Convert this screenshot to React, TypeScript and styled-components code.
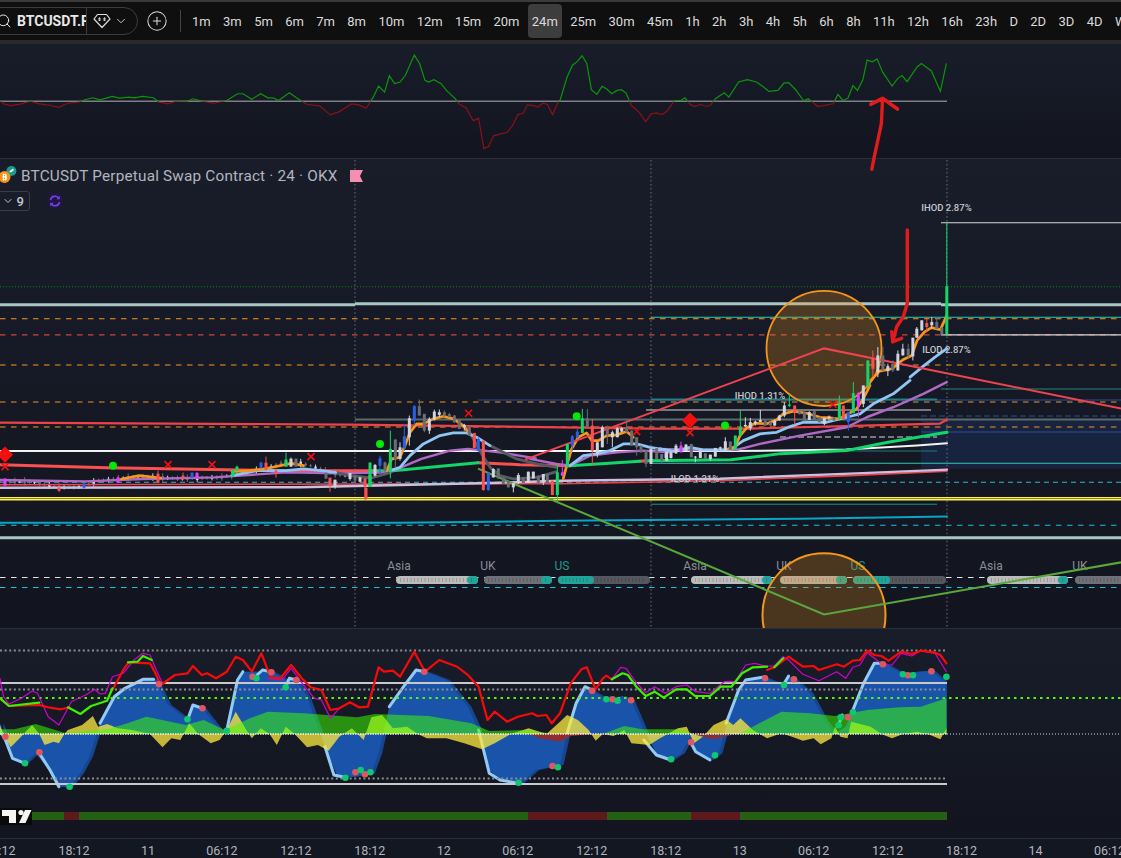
import React from 'react'
import styled, { createGlobalStyle } from 'styled-components'
import { ChevronDown, CirclePlus, Search } from 'lucide-react'

const GlobalStyle = createGlobalStyle`
  html, body {
    margin: 0;
    padding: 0;
    background: #131722;
    overflow: hidden;
  }
  * { box-sizing: border-box; }
`

const Stage = styled.div`
  position: relative;
  width: 1121px;
  height: 858px;
  display: flex;
  flex-direction: column;
  overflow: hidden;
  font-family: Roboto, 'Liberation Sans', sans-serif;
  background: #131722;
`

const Toolbar = styled.header`
  flex: none;
  height: 44px;
  display: flex;
  align-items: center;
  background: #0f0f0f;
  border-top: 2px solid #3a3a3a;
  border-bottom: 4px solid #2a2a2a;
  overflow: hidden;
`

const SymbolPill = styled.div`
  flex: none;
  margin-left: -20px;
  width: 158px;
  height: 28px;
  display: flex;
  align-items: center;
  border: 1px solid #3c3c3c;
  border-radius: 14px;
  color: #dbdbdb;
`

const SymbolName = styled.div`
  width: 106px;
  height: 100%;
  display: flex;
  align-items: center;
  gap: 5px;
  padding-left: 15px;
  border-right: 1px solid #3c3c3c;
  overflow: hidden;
  white-space: nowrap;
  font-size: 14px;
  font-weight: 700;
  color: #e8e8e8;
  svg {
    flex: none;
  }
`

const GemBox = styled.div`
  flex: 1;
  display: flex;
  align-items: center;
  justify-content: center;
  gap: 3px;
  padding-right: 4px;
`

const AddButton = styled.div`
  flex: none;
  margin-left: 8px;
  width: 22px;
  display: flex;
  color: #dbdbdb;
`

const Divider = styled.div`
  flex: none;
  margin: 0 7px 0 12px;
  width: 1px;
  height: 22px;
  background: #434343;
`

const Intervals = styled.nav`
  display: flex;
  align-items: center;
  gap: 4.35px;
`

const Interval = styled.button<{ $active?: boolean }>`
  flex: none;
  height: 34px;
  padding: 0 4px;
  border: 0;
  border-radius: 4px;
  background: ${(p) => (p.$active ? '#3d3d3d' : 'transparent')};
  color: #dbdbdb;
  font-family: inherit;
  font-size: 13px;
  white-space: nowrap;
`

const Pane = styled.section<{ $height: number }>`
  position: relative;
  flex: none;
  height: ${(p) => p.$height}px;
  background: linear-gradient(180deg, #191d2a 0%, #12151f 100%);
  border-bottom: 1px solid #2a2e39;
  overflow: hidden;
`

const Chart = styled.svg`
  display: block;
  width: 100%;
  height: 100%;
`

const Legend = styled.div`
  position: absolute;
  top: 8px;
  left: 0;
  display: flex;
  flex-direction: column;
  gap: 6px;
  color: #b2b5be;
`

const LegendTitle = styled.div`
  height: 18px;
  display: flex;
  align-items: center;
  font-size: 15.3px;
  letter-spacing: 0.2px;
  white-space: nowrap;
  svg {
    flex: none;
  }
`

const FlagMark = styled.span`
  margin-left: 12px;
  display: flex;
`

const LegendTools = styled.div`
  display: flex;
  align-items: center;
  gap: 16px;
`

const CountBox = styled.div`
  margin-left: -4px;
  width: 34px;
  height: 20px;
  display: flex;
  align-items: center;
  justify-content: flex-end;
  gap: 3px;
  padding-right: 5px;
  border: 1px solid #3a3e4a;
  border-radius: 3px;
  font-size: 13px;
  font-weight: 500;
  color: #c4c7cf;
`

const TimeAxis = styled.footer`
  flex: 1;
  margin-left: -37px;
  padding-top: 4px;
  display: flex;
  align-items: center;
  font-size: 12.5px;
  color: #b2b5be;
`

const TimeLabel = styled.span`
  flex: none;
  width: 73.97px;
  text-align: center;
`

const Annotations = styled.svg`
  position: absolute;
  inset: 0;
  width: 1121px;
  height: 858px;
  pointer-events: none;
`

// the points below are read off 2.8x / 3x crops of the reference, so keep the crop numbers
const crop = (s: string, ox: number, oy: number, sx = 2.8, sy = 3) =>
  s
    .trim()
    .split(/\s+/)
    .map((p) => {
      const [x, y] = p.split(',').map(Number)
      return `${(ox + x / sx).toFixed(1)},${(oy + y / sy).toFixed(1)}`
    })
    .join(' ')

const intervals = [
  '1m', '3m', '5m', '6m', '7m', '8m', '10m', '12m', '15m', '20m', '24m', '25m', '30m', '45m',
  '1h', '2h', '3h', '4h', '5h', '6h', '8h', '11h', '12h', '16h', '23h', 'D', '2D', '3D', '4D', 'W',
]

const timeLabels = [
  '12:12', '18:12', '11', '06:12', '12:12', '18:12', '12', '06:12', '12:12', '18:12', '13',
  '06:12', '12:12', '18:12', '14', '06:12',
]

/* top oscillator */
const momentum = [
  crop(
    `0,300 10,310 30,315 60,310 85,302 110,310 140,314 165,320 190,308 220,305 240,297 260,292 280,298 315,288 335,293
    360,290 375,292 400,288 430,292 445,305 470,310 490,303 525,302 540,295 565,302 600,308 635,300 665,280 680,280
    705,296 730,280 750,292 765,292 780,300 810,277 830,292 860,312 895,316 925,343 950,333 985,310 1005,313 1025,323
    1045,290 1060,257 1077,275 1090,226 1105,250 1120,245 1135,225 1160,165 1175,190 1190,240 1200,245 1215,238 1235,250
    1250,270 1275,295 1285,310 1305,322 1325,360 1340,353 1355,443 1368,437 1382,405 1400,400 1420,395 1435,375 1450,342
    1465,338 1477,313 1495,315 1505,320 1520,308 1533,312 1547,342 1565,300`,
    0,
    0,
  ),
  crop(
    `0,300 20,230 35,195 47,185 62,167 75,190 88,268 103,282 118,258 130,265 145,280 160,270 172,268 185,278 200,315 222,335
    240,363 255,340 270,337 285,342 300,332 320,300 338,300 350,292 365,312 378,318 393,312 408,317 420,315 435,295 460,277
    473,290 500,245 525,238 550,245 570,260 585,273 610,270 627,248 640,247 660,268 682,301 695,295 722,318 765,310 778,282
    792,300 806,293 820,256 833,270 848,238 860,180 875,185 888,176 903,215 930,257 945,235 958,226 972,244 1000,200 1012,190
    1040,212 1065,273 1082,190`,
    560,
    0,
  ),
].join(' ')

/* main pane */
type Level = { y: number; x1?: number; x2?: number; c: string; w?: number; dash?: string }
const orangeDash = '5.5 5.5'
const levels: Level[] = [
  { y: 222.5, x1: 941, c: '#d8d8d8' },
  { y: 286.5, c: '#0c8a12', dash: '1 2' },
  { y: 304.5, x2: 355, c: '#a9c6c2', w: 3 },
  { y: 303.5, x1: 355, x2: 941, c: '#a9c6c2', w: 3 },
  { y: 304.5, x1: 941, c: '#a9c6c2', w: 3 },
  { y: 317, x1: 651, c: '#2fc9b2', w: 1 },
  { y: 318.5, c: '#f5971d', dash: orangeDash },
  { y: 334.5, c: '#d0463d', dash: orangeDash },
  { y: 334.5, x1: 941, c: '#d8d8d8' },
  { y: 364.5, c: '#f5971d', dash: orangeDash },
  { y: 388.5, x1: 941, c: '#1f8a7d' },
  { y: 399.5, x1: 478, c: '#2a4f9e' },
  { y: 399, x1: 651, x2: 937, c: '#23808a', w: 2 },
  { y: 401.5, c: '#e8962a', dash: orangeDash },
  { y: 409.5, x1: 646, x2: 931, c: '#d8d8d8' },
  { y: 415.5, x1: 921, c: '#2a4f9e', dash: '6 3' },
  { y: 419, x1: 355, c: '#5c6b6a', w: 2 },
  { y: 426.5, c: '#f5971d', dash: orangeDash },
  { y: 431.5, x1: 921, c: '#2a4f9e' },
  { y: 436.5, x1: 780, x2: 937, c: '#d8d8d8', dash: '6 3' },
  { y: 450.5, x1: 651, x2: 937, c: '#1a7f80' },
  { y: 462.5, x1: 651, c: '#2fc9b2' },
  { y: 481.5, c: '#2fb9c9', dash: '5 4' },
  { y: 497, c: '#fff04a', w: 1.5 },
  { y: 499, c: '#fff04a', w: 1.5 },
  { y: 503.5, x1: 651, x2: 937, c: '#1a8f8a' },
  { y: 524.5, c: '#12c4dc', dash: '5.5 5.5' },
  { y: 537, c: '#a9c6c2', w: 3 },
  { y: 576.5, c: '#e3e3e3', dash: '5.5 5.5' },
  { y: 586.5, c: '#12c4dc', dash: '5.5 5.5' },
]

const redUpper = '0,422 350,424 650,428 750,428 900,424 940,423 947,419'
const whiteBand = '0,450.5 730,450.5 846,449 917,445 947,442.7'
const cyanBand = '0,522 400,522 560,520 800,518 947,515.7'
const lilacBand = '0,487 300,486.5 500,482 560,480 720,478 850,473 947,469'
const redBand = '0,484 560,483 720,480 850,475 947,470.5'

// slow line, red while below price and green above
const slowRed = ['0,464 107,467 285,470 372,470', '478,462 520,464 570,465', '640,460.7 646,460']
const slowGreen = ['372,470 393,470 478,462', '570,465 640,460.7', '646,460 731,459 781,453 846,450 888,441.7 947,431.7']

const purple =
  crop('0,268 120,270 240,272 400,265 600,260 800,245 950,248 1090,245 1180,205 1260,180 1310,175 1400,185 1500,203', 0, 390) +
  ' ' +
  crop('540,190 620,205 660,210 720,180 800,170 880,165 960,170', 350, 395, 3) +
  ' ' +
  crop('0,205 100,208 230,208 300,190 420,165 560,140 620,110 700,80 790,40 860,5', 660, 380, 3)

const skyLines = [
  crop('650,255 720,240 800,240 850,235 900,240 940,245', 0, 390),
  crop('120,225 150,215 180,180 220,145 270,120 310,112 350,112 380,125 420,150', 350, 395, 3),
  crop('660,210 700,180 740,175 780,165 820,145 860,145 900,155 960,165', 350, 395, 3),
  crop('0,205 40,212 90,200 130,208 210,208 250,180 300,160 350,155 390,138 430,125 500,125 560,110 600,100 640,70 700,40 750,0', 660, 380, 3),
  crop('980,530 1020,495 1050,470 1083,445', 560, 200),
]

const greyLines = [
  crop('940,245 980,255 1040,262 1095,245', 0, 390),
  crop('350,95 370,130 395,175 420,215 450,240 490,250 560,245 620,228', 350, 395, 3),
  crop('420,150 460,170 500,190 560,205 620,215', 350, 395, 3),
]

const orangeLines = [
  crop('340,265 390,255 450,262', 0, 390),
  crop('650,243 700,240 740,235 815,218 850,225', 0, 390),
  crop('110,225 125,190 150,185 165,150 180,110 200,85 220,85 250,70 280,62 310,70 340,90 355,110', 350, 395, 3),
  crop('640,248 650,210 665,160 685,125 710,112 725,135 745,135 770,120 800,118 830,108 850,125', 350, 395, 3),
  crop('205,205 225,200 240,165 260,142 285,128 320,130 350,118 370,100 400,92 440,98 480,110 510,112 535,115 565,100 590,85 610,55 630,15', 660, 380, 3),
  crop('870,540 895,512 930,505 960,478 985,465 1000,420 1020,395 1040,382 1065,388 1083,345', 560, 200),
]

const candleColors: Record<string, string> = {
  w: '#d1d4dc',
  g: '#6a6d75',
  G: '#12d668',
  b: '#2a5fe8',
  r: '#fb5050',
  m: '#e040fb',
}
type Candle = [number, number, number, number, number, string]

const middleCandles: Candle[] = (
  [
    [0, 232, 232, 250, 255, 'w'], [15, 238, 240, 255, 262, 'g'], [30, 243, 245, 258, 260, 'w'], [45, 248, 248, 272, 315, 'r'],
    [60, 200, 238, 273, 273, 'G'], [75, 205, 208, 240, 242, 'w'], [90, 180, 188, 210, 235, 'b'], [105, 198, 200, 225, 235, 'g'],
    [121, 105, 160, 228, 248, 'G'], [136, 130, 132, 190, 215, 'g'], [150, 140, 155, 190, 195, 'w'], [163, 85, 122, 158, 165, 'b'],
    [178, 60, 68, 125, 150, 'w'], [193, 28, 32, 75, 90, 'b'], [208, 12, 32, 60, 60, 'g'], [223, 55, 55, 105, 110, 'g'],
    [238, 65, 70, 105, 115, 'w'], [253, 42, 48, 72, 75, 'w'], [268, 42, 50, 58, 65, 'w'], [283, 45, 50, 60, 64, 'g'],
    [298, 52, 56, 64, 66, 'g'], [313, 58, 60, 80, 82, 'g'], [328, 72, 72, 100, 100, 'g'], [343, 85, 88, 94, 105, 'w'],
    [358, 95, 95, 120, 120, 'g'], [373, 112, 112, 157, 157, 'r'], [385, 125, 130, 165, 168, 'b'], [400, 135, 135, 283, 285, 'r'],
    [415, 230, 232, 283, 285, 'b'], [430, 218, 220, 245, 246, 'w'], [445, 218, 218, 248, 250, 'g'], [460, 245, 245, 265, 265, 'g'],
    [475, 255, 255, 275, 275, 'g'], [490, 262, 262, 275, 290, 'w'], [505, 232, 238, 262, 265, 'w'], [520, 245, 245, 262, 262, 'g'],
    [535, 228, 228, 262, 262, 'w'], [550, 228, 228, 248, 248, 'w'], [565, 240, 240, 260, 265, 'g'], [580, 235, 235, 260, 268, 'w'],
    [592, 235, 235, 262, 262, 'g'], [607, 255, 255, 298, 298, 'r'], [622, 205, 230, 298, 315, 'G'], [637, 193, 230, 240, 240, 'm'],
    [652, 145, 145, 215, 215, 'G'], [667, 118, 122, 150, 165, 'b'], [682, 100, 108, 125, 128, 'b'], [697, 40, 68, 112, 112, 'G'],
    [712, 40, 68, 95, 95, 'g'], [727, 70, 90, 165, 210, 'r'], [742, 140, 140, 175, 185, 'w'], [757, 90, 95, 155, 155, 'w'],
    [772, 90, 100, 118, 145, 'g'], [787, 105, 110, 125, 155, 'w'], [802, 95, 98, 125, 125, 'w'], [815, 95, 98, 108, 110, 'w'],
    [830, 72, 95, 110, 110, 'g'], [845, 105, 105, 150, 150, 'g'], [860, 125, 125, 155, 180, 'g'], [873, 150, 150, 170, 172, 'g'],
    [888, 165, 165, 205, 215, 'g'], [903, 160, 160, 205, 205, 'w'], [920, 158, 158, 190, 190, 'g'], [935, 175, 175, 195, 205, 'g'],
    [950, 168, 168, 195, 197, 'w'],
  ] as Candle[]
).map(([x, a, b, c, d, k]) => [350 + x / 3, 395 + a / 3, 395 + b / 3, 395 + c / 3, 395 + d / 3, k] as Candle)

const lateCandles: Candle[] = (
  [
    [18, 216, 218, 232, 234, 'w'], [33, 213, 215, 232, 234, 'w'], [48, 190, 195, 218, 220, 'w'], [63, 183, 195, 215, 216, 'm'],
    [78, 190, 192, 212, 212, 'w'], [94, 190, 190, 230, 230, 'g'], [106, 226, 228, 231, 245, 'w'], [121, 205, 210, 232, 232, 'w'],
    [136, 218, 218, 235, 235, 'g'], [151, 222, 222, 235, 240, 'w'], [166, 202, 202, 228, 228, 'w'], [181, 198, 200, 204, 212, 'w'],
    [196, 170, 182, 210, 210, 'w'], [211, 183, 183, 208, 208, 'g'], [226, 165, 165, 208, 208, 'G'], [241, 90, 140, 165, 165, 'G'],
    [256, 110, 133, 138, 140, 'w'], [271, 112, 125, 143, 150, 'w'], [286, 120, 123, 129, 135, 'w'], [301, 88, 118, 124, 125, 'w'],
    [316, 118, 120, 135, 135, 'g'], [331, 123, 125, 135, 135, 'g'], [344, 118, 120, 135, 135, 'w'], [358, 103, 105, 120, 120, 'w'],
    [373, 65, 75, 105, 110, 'w'], [388, 40, 72, 76, 80, 'G'], [404, 75, 75, 95, 132, 'r'], [418, 90, 93, 100, 102, 'g'],
    [433, 95, 95, 120, 122, 'g'], [448, 92, 95, 118, 118, 'w'], [463, 92, 92, 118, 118, 'g'], [478, 110, 110, 125, 125, 'g'],
    [493, 112, 112, 130, 134, 'w'], [507, 105, 108, 113, 118, 'w'], [522, 110, 110, 120, 120, 'g'], [538, 45, 72, 115, 120, 'G'],
    [550, 75, 75, 115, 115, 'r'], [565, 95, 95, 125, 150, 'b'], [580, 5, 38, 98, 98, 'G'], [595, 35, 38, 78, 110, 'm'],
    [610, 15, 15, 70, 80, 'w'],
  ] as Candle[]
).map(([x, a, b, c, d, k]) => [660 + x / 3, 380 + a / 3, 380 + b / 3, 380 + c / 3, 380 + d / 3, k] as Candle)

const lastCandles: Candle[] = (
  [
    [862, 480, 480, 558, 558, 'G'], [876, 450, 475, 505, 530, 'r'], [890, 440, 465, 515, 530, 'w'], [904, 440, 465, 510, 510, 'g'],
    [918, 490, 497, 512, 527, 'w'], [932, 480, 495, 510, 515, 'g'], [946, 450, 460, 510, 510, 'w'], [960, 430, 445, 465, 465, 'w'],
    [975, 430, 445, 465, 475, 'g'], [988, 412, 412, 468, 480, 'w'], [999, 380, 385, 412, 412, 'w'], [1013, 360, 360, 390, 390, 'w'],
    [1027, 350, 368, 380, 395, 'r'], [1041, 350, 365, 375, 385, 'w'], [1055, 350, 365, 385, 385, 'g'], [1069, 382, 382, 402, 402, 'g'],
    [1083, 68, 258, 402, 402, 'G'],
  ] as Candle[]
).map(([x, a, b, c, d, k]) => [560 + x / 2.8, 200 + a / 3, 200 + b / 3, 200 + c / 3, 200 + d / 3, k] as Candle)

// the quiet stretch left of the first session line is too small to read one by one
const quietPath: [number, number][] = [
  [0, 481], [30, 481], [60, 487], [80, 486], [100, 480], [140, 476], [180, 478], [220, 477], [240, 473],
  [265, 468], [290, 460], [310, 465], [330, 472], [350, 476],
]
const quietY = (x: number) => {
  for (let i = 1; i < quietPath.length; i++) {
    const [x0, y0] = quietPath[i - 1]
    const [x1, y1] = quietPath[i]
    if (x <= x1) return y0 + ((x - x0) / (x1 - x0)) * (y1 - y0)
  }
  return 476
}
const quietCandles: Candle[] = Array.from({ length: 71 }, (_, i) => {
  const x = i * 4.93
  const y = quietY(x)
  const h = [1, 2, 1.5, 3, 1, 3.5, 1.5][i % 7]
  return [x, y - h - 1, y - h / 2, y + h / 2, y + h + 0.5, i % 3 === 1 ? 'w' : 'g'] as Candle
})
const quietSpecials: Candle[] = [
  [5, 478, 478, 485, 485, 'm'], [59, 486, 487, 490, 491, 'r'], [84, 482, 483, 487, 488, 'b'], [118, 476, 477, 482, 482, 'm'],
  [158, 470, 473, 482, 482, 'r'], [183, 472, 475, 478, 479, 'r'], [192, 472, 472, 477, 477, 'b'], [197, 472, 472, 478, 478, 'm'],
  [233, 469, 469, 476, 476, 'G'], [237, 465, 466, 470, 470, 'G'], [261, 461, 462, 467, 468, 'b'], [266, 456, 462, 469, 470, 'r'],
  [276, 468, 470, 473, 477, 'r'], [286, 452, 459, 466, 466, 'G'], [291, 458, 458, 466, 466, 'w'], [296, 458, 458, 466, 466, 'g'],
  [326, 472, 472, 478, 478, 'g'], [330, 477, 477, 485, 491, 'r'], [335, 479, 479, 486, 488, 'w'], [366, 487, 487, 498, 499, 'r'],
  [370, 462, 462, 486, 486, 'G'],
]

const crosses: [number, number][] = [
  [5, 466], [168, 464], [212, 464], [311, 456], [468.6, 412.7], [636.7, 431], [690, 432], [833, 404],
]
const diamonds: [number, number][] = [[5, 454], [690, 420]]
const limeDots: [number, number][] = [[113, 465], [380, 443.5], [576.7, 415.7], [725, 425]]

const sessionLabels: [string, number, boolean?][] = [
  ['Asia', 399], ['UK', 488], ['US', 562, true], ['Asia', 695], ['UK', 784], ['US', 858, true], ['Asia', 991], ['UK', 1080],
]
const sessionBars: [number, number, string][] = [
  [396, 478, '#bcbcbc'], [467, 478, '#21a59a'], [484, 552, '#6f7178'], [541, 552, '#21a59a'],
  [558, 650, '#55585f'], [558, 594, '#21a59a'], [691, 772, '#bcbcbc'], [762, 772, '#21a59a'],
  [780, 847, '#b0b0b0'], [836, 847, '#21a59a'], [853, 946, '#55585f'], [853, 890, '#21a59a'],
  [987, 1068, '#bcbcbc'], [1058, 1068, '#21a59a'], [1075, 1125, '#6f7178'],
]

/* lower oscillator */
const waveTop =
  crop(
    `0,280 15,320 35,385 70,400 100,370 130,410 165,470 195,470 225,430 250,380 280,280 320,200 350,175 400,148 435,148
    470,225 525,270 540,225 567,235 615,300 635,300 665,150 680,125 720,125 750,120 800,150 830,150 860,200 880,260 910,350
    945,440 990,440 1040,430 1060,370 1090,230 1130,180 1165,120 1190,125 1250,150 1310,230 1340,300 1370,420 1400,450
    1455,462 1500,420 1545,410`,
    0,
    630,
  ) +
  ' ' +
  crop(
    `0,405 20,310 40,230 70,170 100,190 130,208 175,198 200,212 235,300 270,370 310,390 340,370 365,320 380,365 420,390 445,370
    470,270 510,165 545,140 575,145 625,165 640,138 655,148 700,190 740,270 770,310 800,290 820,240 850,160 880,100 905,100
    960,132 1000,125 1040,122 1082,160`,
    560,
    630,
  )

const waveEdges = [
  crop('0,300 15,330 35,385 70,400', 0, 630),
  crop('110,370 140,420 165,470', 0, 630),
  crop('280,280 320,200 350,175 400,148 430,148', 0, 630),
  crop('525,270 540,225 567,235', 0, 630),
  crop('635,300 665,150 680,125', 0, 630),
  crop('720,135 735,120 760,125', 0, 630),
  crop('800,170 810,145 830,150', 0, 630),
  crop('910,350 935,435 965,442', 0, 630),
  crop('1090,230 1130,170 1165,120 1190,125', 0, 630),
  crop('1340,300 1370,430 1400,450 1450,460', 0, 630),
  crop('20,310 45,220 70,170 90,180', 560, 630),
  crop('235,330 270,375 310,390', 560, 630),
  crop('365,335 380,365 420,390', 560, 630),
  crop('465,280 500,180 520,150 575,140', 560, 630),
  crop('625,165 640,138', 560, 630),
  crop('780,285 790,255', 560, 630),
  crop('820,240 850,160 880,100 905,100', 560, 630),
]

const greenTop =
  crop(
    `0,298 40,298 100,282 180,308 300,298 350,282 410,260 520,285 570,270 630,300 700,265 750,245 850,250 1000,262 1050,252
    1200,258 1320,280 1370,303 1480,300 1550,312`,
    0,
    630,
  ) +
  ' ' +
  crop(
    `120,312 180,288 230,298 280,298 340,298 375,312 500,312 540,290 620,245 700,250 770,258 860,240 950,232 1010,230 1082,205`,
    560,
    630,
  )

const yellowTop =
  crop(
    `0,285 8,312 30,352 55,325 90,285 110,312 125,345 150,335 165,340 180,312 190,300 230,285 260,258 275,290 300,282 330,295
    370,300 420,312 455,352 480,325 505,330 530,280 555,312 590,340 615,330 635,300 660,245 690,300 705,325 730,295 755,312
    775,345 800,290 825,312 860,352 890,345 920,362 950,320 985,295 1018,330 1040,262 1070,255 1100,295 1140,290 1170,312
    1195,325 1250,325 1300,340 1350,358 1385,340 1430,312 1480,295 1530,312`,
    0,
    630,
  ) +
  ' ' +
  crop(
    `0,275 20,255 50,270 80,300 100,332 120,312 150,318 180,300 200,340 250,345 280,325 330,295 355,290 375,340 400,320 430,285
    465,268 485,285 505,265 540,300 580,325 620,310 650,320 680,332 710,325 730,343 760,325 770,290 785,320 805,325 815,275
    870,290 900,312 930,325 960,312 1000,305 1030,312 1065,328 1082,295`,
    560,
    630,
  )

const redLines = [
  crop('0,205 25,228 110,225 140,233 170,238 195,232', 0, 630),
  crop(
    `315,180 345,120 360,97 420,100 435,130 450,165 490,135 525,130 540,108 565,135 580,130 605,145 635,125 660,80 680,90 705,125
    732,70 758,143 785,145 815,105 845,145 870,172 900,180 925,240 950,235 980,217 1005,232 1030,230 1060,112 1075,125 1100,122
    1120,140 1160,65 1190,125 1230,90 1280,110 1310,135 1340,170 1365,270 1385,245 1420,275 1450,260 1490,250 1505,258 1530,255
    1545,280 1568,250`,
    0,
    630,
  ) +
    ' ' +
    crop('0,250 30,160 60,118 75,112 100,178 120,145 130,137 145,148', 560, 630),
  crop(
    `580,120 600,112 640,80 680,110 710,108 725,120 775,103 795,110 820,92 840,90 860,62 880,75 900,78 920,92 955,65 985,72
    1010,62 1050,68 1065,75 1082,100`,
    560,
    630,
  ),
]

const limeLines = [
  crop('0,205 25,228 110,218', 0, 630),
  crop('190,232 225,252 255,228 300,212 315,175', 0, 630),
  crop('358,97 385,95 400,78 425,90', 0, 630),
  crop(
    `145,148 175,130 190,135 215,172 240,198 265,185 290,203 325,178 355,178 378,198 420,198 450,170 480,170 510,130 540,112 580,110`,
    560,
    630,
  ),
  crop('600,112 625,85', 560, 630),
]

const magentaLines = [
  crop(
    `0,145 10,200 25,222 60,205 90,183 105,190 135,260 165,285 200,215 240,195 265,178 280,192 295,190 315,140 345,130 375,90
    400,70 420,75 440,125 455,160`,
    0,
    630,
  ),
  crop('750,145 790,150 815,115 850,165 880,205 900,210 925,265 950,235', 0, 630),
  crop(
    `145,148 170,112 185,115 215,160 240,188 265,170 295,190 325,170 355,165 380,185 420,190 460,155 490,155 520,105 545,100
    575,108 600,108 625,80 640,90 680,133 725,152 775,125 800,145 820,112 840,105 860,68 905,105 930,105 955,70 985,78
    1010,62 1050,70 1082,125`,
    560,
    630,
  ),
]

const redDots = [
  ...crop('15,320 110,367 445,163 567,235 707,140 760,127 830,150 995,427 1022,433 1188,125 1547,408', 0, 630).split(' '),
  ...crop('90,182 147,208 199,211 367,337 574,145 655,148 806,262 904,103 974,136 1040,124', 560, 630).split(' '),
]
const greenDots = [
  ...crop('70,400 195,470 525,268 635,302 718,145 800,172 967,443 1010,420 1037,427 1452,458 1562,412', 0, 630).split(' '),
  ...crop('130,208 161,212 311,388 434,376 627,165 780,286 786,262 820,247 960,133 988,136 1082,140', 560, 630).split(' '),
]

const statusBar: [number, number, string][] = [
  [32, 64, '#245f14'], [64, 79, '#5c1a1e'], [79, 528, '#245f14'], [528, 607, '#5c1a1e'],
  [607, 691, '#245f14'], [691, 740, '#5c1a1e'], [740, 947, '#245f14'],
]

const Lines = ({ list, c, w }: { list: string[]; c: string; w: number }) => (
  <g fill="none" stroke={c} strokeWidth={w} strokeLinejoin="round" strokeLinecap="round">
    {list.map((p, i) => (
      <polyline key={i} points={p} />
    ))}
  </g>
)

const Candles = ({ list, w = 3 }: { list: Candle[]; w?: number }) => (
  <g>
    {list.map(([x, wt, bt, bb, wb, k], i) => (
      <g key={i} fill={candleColors[k]}>
        <rect x={x - 0.5} y={wt} width={1} height={wb - wt} />
        <rect x={x - w / 2} y={bt} width={w} height={Math.max(bb - bt, 1)} />
      </g>
    ))}
  </g>
)

const MomentumChart = () => (
  <Chart viewBox="0 44 1121 113" preserveAspectRatio="none">
    <defs>
      <clipPath id="above">
        <rect x="0" y="0" width="1121" height="101" />
      </clipPath>
      <clipPath id="below">
        <rect x="0" y="101" width="1121" height="60" />
      </clipPath>
    </defs>
    <line x1="0" x2="947" y1="100.8" y2="100.8" stroke="#7c7f88" strokeWidth="1.5" />
    <polyline points={momentum} fill="none" stroke="#0b960b" strokeWidth="1.2" clipPath="url(#above)" />
    <polyline points={momentum} fill="none" stroke="#8c1016" strokeWidth="1.2" clipPath="url(#below)" />
  </Chart>
)

const MainChart = () => (
  <Chart viewBox="0 159 1121 468" preserveAspectRatio="none">
    <rect x="921" y="418" width="200" height="50" fill="#17233f" />
    {[355, 651, 947].map((x) => (
      <line key={x} x1={x} x2={x} y1="160" y2="628" stroke="#6d717b" strokeDasharray="1.5 2.5" />
    ))}
    {levels.map((l, i) => (
      <line
        key={i}
        x1={l.x1 ?? 0}
        x2={l.x2 ?? 1121}
        y1={l.y}
        y2={l.y}
        stroke={l.c}
        strokeWidth={l.w ?? 1}
        strokeDasharray={l.dash}
      />
    ))}

    <Candles list={quietCandles} w={2.5} />

    <Lines list={[redUpper]} c="#f0404c" w={2.2} />
    <Lines list={[cyanBand]} c="#06a6c6" w={2} />
    <Lines list={[redBand]} c="#f0404c" w={1.6} />
    <Lines list={[whiteBand]} c="#f2f2f2" w={2} />
    <Lines list={[lilacBand]} c="#cdbfdc" w={2.4} />
    <Lines list={slowRed} c="#fb5050" w={3} />
    <Lines list={slowGreen} c="#12d668" w={3} />

    {sessionBars.map(([a, b, c], i) => (
      <g key={i} fill="none" strokeLinecap="round">
        <line x1={a + 4} x2={b - 4} y1="579" y2="579" stroke={c} strokeWidth="8" />
        <line x1={a + 4} x2={b - 4} y1="579" y2="579" stroke="#00000030" strokeWidth="4" strokeDasharray="1 2.5" strokeLinecap="butt" />
      </g>
    ))}
    {sessionLabels.map(([t, x, teal], i) => (
      <text key={i} x={x} y="569" fontSize="12" textAnchor="middle" fill={teal ? '#1d9a90' : '#8a8d96'}>
        {t}
      </text>
    ))}

    <circle cx="824" cy="348" r="57.5" fill="#f5971d" fillOpacity="0.25" stroke="#f5971d" strokeWidth="1.8" />
    <circle cx="824" cy="614" r="61.5" fill="#f5971d" fillOpacity="0.25" stroke="#f5971d" strokeWidth="2" />

    <Lines list={[purple]} c="#b06ac6" w={2.4} />
    <Lines list={greyLines} c="#555a62" w={2.8} />
    <Lines list={skyLines} c="#90c6f4" w={2.8} />
    <Lines list={orangeLines} c="#f7951d" w={2.7} />

    <polyline points="525,459 824,348 1121,408" fill="none" stroke="#ef4350" strokeWidth="2" />
    <polyline points="478,468 824,613.5 1121,561.5" fill="none" stroke="#5aa83c" strokeWidth="2" />

    <Candles list={quietSpecials} />
    <Candles list={middleCandles} />
    <Candles list={lateCandles} />
    <Candles list={lastCandles} />

    {diamonds.map(([x, y], i) => (
      <polygon key={i} points={`${x - 8},${y} ${x},${y - 8} ${x + 8},${y} ${x},${y + 8}`} fill="#f40f0f" />
    ))}
    {crosses.map(([x, y], i) => (
      <path
        key={i}
        d={`M${x - 3.5} ${y - 3.5}L${x + 3.5} ${y + 3.5}M${x + 3.5} ${y - 3.5}L${x - 3.5} ${y + 3.5}`}
        stroke="#f40f0f"
        strokeWidth="1.6"
      />
    ))}
    {limeDots.map(([x, y], i) => (
      <circle key={i} cx={x} cy={y} r="4" fill="#05e60b" />
    ))}

    <g fill="#c6c8ce" fontSize="9.5" fontWeight="500" textAnchor="middle">
      <text x="946.5" y="210.5">IHOD 2.87%</text>
      <text x="946.5" y="352.5">ILOD 2.87%</text>
      <text x="760" y="398.5">IHOD 1.31%</text>
      <text x="695" y="481.5">ILOD 1.31%</text>
    </g>
  </Chart>
)

const OscillatorChart = () => (
  <Chart viewBox="0 629 1121 209" preserveAspectRatio="none">
    <defs>
      <clipPath id="plotted">
        <rect x="0" y="629" width="947" height="209" />
      </clipPath>
    </defs>
    <g clipPath="url(#plotted)">
      <polygon points={`0,734 ${waveTop} 946.5,734`} fill="#16468f" transform="translate(3.5 0)" />
    </g>
    <polygon points={`0,734 ${waveTop} 946.5,734`} fill="#1a54aa" />
    <Lines list={waveEdges} c="#92cbf7" w={3} />
    <polygon points={`0,734 ${yellowTop} 946.5,734`} fill="#ffeb3c" fillOpacity="0.75" />
    <polygon points={`0,734 ${greenTop} 946.5,734`} fill="#3cfe00" fillOpacity="0.52" />
    <polygon points={crop('1480,312 1510,325 1568,335', 0, 630) + ' ' + crop('0,335 30,318 100,312', 560, 630)} fill="#8d2c33" />
    <polygon points={crop('370,312 430,328 480,315', 560, 630)} fill="#8d2c33" />

    {[650.5, 689.5, 778.5].map((y) => (
      <line key={y} x1="0" x2="947" y1={y} y2={y} stroke="#8b8d92" strokeWidth="2" strokeDasharray="2 2.6" />
    ))}
    {[683, 784].map((y) => (
      <line key={y} x1="0" x2="947" y1={y} y2={y} stroke="#c9c9c9" strokeWidth="2" />
    ))}
    <line x1="0" x2="1121" y1="698" y2="698" stroke="#54f500" strokeWidth="2" strokeDasharray="2.5 4" />
    <line x1="0" x2="947" y1="734" y2="734" stroke="#f4f4f4" strokeWidth="1.5" strokeDasharray="1.5 1" />
    <line x1="947" x2="1121" y1="734" y2="734" stroke="#d8d8d8" strokeDasharray="1 2" />

    <Lines list={magentaLines} c="#d000d0" w={1.2} />
    <Lines list={redLines} c="#f80a0a" w={2.2} />
    <Lines list={limeLines} c="#3cf000" w={2.2} />

    {redDots.map((p, i) => {
      const [x, y] = p.split(',')
      return <circle key={i} cx={x} cy={y} r="3.3" fill="#e0555f" />
    })}
    {greenDots.map((p, i) => {
      const [x, y] = p.split(',')
      return <circle key={i} cx={x} cy={y} r="3.3" fill="#10c770" />
    })}

    {statusBar.map(([a, b, c]) => (
      <rect key={a} x={a} y="812" width={b - a} height="8" fill={c} />
    ))}
    <rect x="0" y="808" width="32" height="17" fill="#0a0a0a" />
    <path d="M2 810H16V823H9V816H2Z" fill="#f4f4f4" />
    <circle cx="21" cy="812.5" r="2.6" fill="#f4f4f4" />
    <path d="M25 810H31.5L25.5 823H19Z" fill="#f4f4f4" />
  </Chart>
)

const GemIcon = () => (
  <svg width="18" height="16" viewBox="0 0 18 16" fill="none">
    <path d="M4.5 1.5h9L17 6l-8 8.5L1 6z" stroke="#dbdbdb" strokeWidth="1.2" strokeLinejoin="round" />
    <path d="M5 6.2h3L6.5 4zM10 6.2h3L11.5 4zM5.6 6h1.8v2H5.6zM10.6 6h1.8v2h-1.8z" fill="#dbdbdb" />
  </svg>
)

const CoinIcon = () => (
  <svg width="21" height="20" viewBox="0 0 21 20">
    <circle cx="11.4" cy="5" r="5" fill="#1c9a8c" />
    <path d="M9 5.5l4-3 1 1.5-3 2.5z" fill="#e6f6f3" />
    <circle cx="4.5" cy="11" r="6" fill="#f7931a" />
    <path d="M3.5 7.5v7M5.5 7.5v7M2.5 8.5h3.6v2.4H2.5M2.5 11h4v2.6h-4" stroke="#fff" strokeWidth="0.9" fill="none" />
  </svg>
)

const FlagIcon = () => (
  <svg width="13" height="12" viewBox="0 0 13 12">
    <path d="M0 0H13L10 6L13 12H0Z" fill="#f48fb1" />
  </svg>
)

const SyncIcon = () => (
  <svg width="18" height="18" viewBox="0 0 18 18" fill="none">
    <circle cx="9" cy="9" r="8.5" fill="#20173f" />
    <path d="M4.5 8a4.6 4.6 0 0 1 8-2.2M13.5 10a4.6 4.6 0 0 1-8 2.2" stroke="#7a3df0" strokeWidth="1.6" />
    <path d="M13.8 3.8v3.4h-3.4zM4.2 14.2v-3.4h3.4z" fill="#7a3df0" />
  </svg>
)

const App = () => (
  <Stage>
    <GlobalStyle />
    <Toolbar>
      <SymbolPill>
        <SymbolName>
          <Search size={16} strokeWidth={1.5} />
          BTCUSDT.P
        </SymbolName>
        <GemBox>
          <GemIcon />
          <ChevronDown size={14} strokeWidth={1.5} />
        </GemBox>
      </SymbolPill>
      <AddButton>
        <CirclePlus size={22} strokeWidth={1.1} />
      </AddButton>
      <Divider />
      <Intervals>
        {intervals.map((t) => (
          <Interval key={t} $active={t === '24m'}>
            {t}
          </Interval>
        ))}
      </Intervals>
    </Toolbar>

    <Pane $height={115}>
      <MomentumChart />
    </Pane>

    <Pane $height={470}>
      <MainChart />
      <Legend>
        <LegendTitle>
          <CoinIcon />
          BTCUSDT Perpetual Swap Contract · 24 · OKX
          <FlagMark>
            <FlagIcon />
          </FlagMark>
        </LegendTitle>
        <LegendTools>
          <CountBox>
            <ChevronDown size={12} strokeWidth={2} />9
          </CountBox>
          <SyncIcon />
        </LegendTools>
      </Legend>
    </Pane>

    <Pane $height={210}>
      <OscillatorChart />
    </Pane>

    <TimeAxis>
      {timeLabels.map((t, i) => (
        <TimeLabel key={i}>{t}</TimeLabel>
      ))}
    </TimeAxis>

    <Annotations viewBox="0 0 1121 858" fill="none" stroke="#e21b1b" strokeLinecap="round" strokeLinejoin="round">
      <polyline strokeWidth="3.4" points={crop('873,508 880,470 890,420 900,370 903,300', 560, 0)} />
      <polyline strokeWidth="3.6" points={crop('870,313 903,295 945,327', 560, 0)} />
      <polyline strokeWidth="3.4" points={crop('172,-150 172,70 160,110 140,140 128,185', 850, 280, 3)} />
      <polyline strokeWidth="3.4" points={crop('125,155 128,185 155,175', 850, 280, 3)} />
    </Annotations>
  </Stage>
)

export default App
